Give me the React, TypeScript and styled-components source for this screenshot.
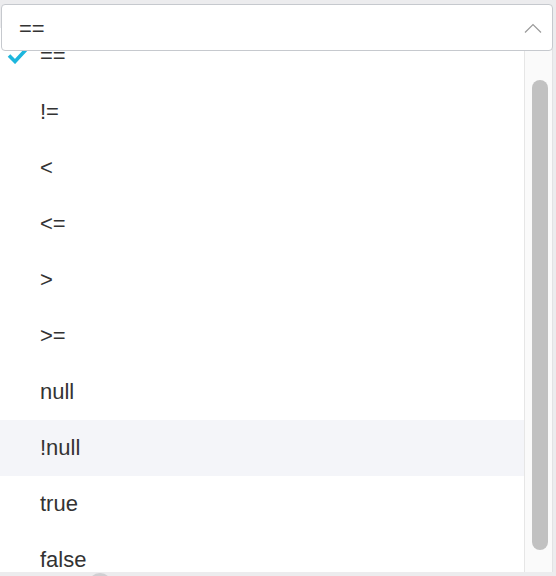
import React from 'react'
import styled, { createGlobalStyle } from 'styled-components'

const options = ['==', '!=', '<', '<=', '>', '>=', 'null', '!null', 'true', 'false']
const selected = '=='
const hovered = '!null'

const App = () => {
	return (
		<Page>
			<GlobalStyle />
			<SelectBox>
				<Value>{selected}</Value>
				<svg width="18" height="10" viewBox="0 0 18 10">
					<path d="M1 9.5 L9 1.5 L17 9.5" fill="none" stroke="#9a9a9a" strokeWidth="1.2" />
				</svg>
			</SelectBox>

			<FormRow>
				<Label>路径</Label>
				<Help>?</Help>
			</FormRow>

			<Dropdown>
				<List>
					{options.map((item) => (
						<Option key={item} active={item === hovered}>
							<CheckSlot>
								{item === selected && (
									<svg width="22" height="18" viewBox="0 0 22 18">
										<path d="M2 9.5 L8 15.5 L20 2.5" fill="none" stroke="#1db6dd" strokeWidth="3.6" />
									</svg>
								)}
							</CheckSlot>
							{item}
						</Option>
					))}
				</List>
				<Track>
					<Thumb />
				</Track>
			</Dropdown>
		</Page>
	)
}

const GlobalStyle = createGlobalStyle`
	body {
		margin: 0;
		background: #f3f4f7;
		font-family: 'Liberation Sans', Arial, 'Noto Sans CJK SC', sans-serif;
	}
`

const Page = styled.div`
	position: relative;
	width: 556px;
	height: 576px;
	overflow: hidden;
	padding-top: 4px;
	box-sizing: border-box;
	background: #ececee;
`

const SelectBox = styled.div`
	position: relative;
	z-index: 2;
	box-sizing: border-box;
	height: 47px;
	margin: 0 3px 0 1px;
	padding: 0 10px 0 17px;
	display: flex;
	align-items: center;
	justify-content: space-between;
	background: #fff;
	border: 1px solid #c6c9ce;
	border-radius: 4px;
`

const Value = styled.span`
	font-size: 22px;
	color: #333;
	padding-top: 3px;
`

const FormRow = styled.div`
	display: flex;
	align-items: center;
	gap: 26px;
	margin-top: 519px;
	padding-left: 20px;
`

const Label = styled.span`
	font-size: 21px;
	color: #333;
`

const Help = styled.span`
	width: 24px;
	height: 24px;
	border-radius: 50%;
	background: #cfcfd2;
	color: #fff;
	font-size: 16px;
	display: flex;
	align-items: center;
	justify-content: center;
`

const Dropdown = styled.div`
	position: absolute;
	z-index: 1;
	top: 28px;
	left: 0;
	width: 553px;
	height: 544px;
	display: flex;
	background: #fff;
	border-right: 1px solid #e2e2e4;
	box-sizing: border-box;
`

const List = styled.div`
	flex: 1;
	overflow: hidden;
`

const Option = styled.div<{ active?: boolean }>`
	height: 56px;
	display: flex;
	align-items: center;
	padding-left: 7px;
	font-size: 22px;
	color: #333;
	background: ${({ active }) => (active ? '#f4f5f9' : '#fff')};
`

const CheckSlot = styled.div`
	width: 33px;
	display: flex;
	align-items: center;
	padding-bottom: 2px;
`

const Track = styled.div`
	width: 28px;
	box-sizing: border-box;
	border-left: 1px solid #e6e6e6;
	background: #fafafa;
	padding: 52px 0 0 7px;
`

const Thumb = styled.div`
	width: 16px;
	height: 470px;
	border-radius: 8px;
	background: #c1c1c1;
`

export default App
